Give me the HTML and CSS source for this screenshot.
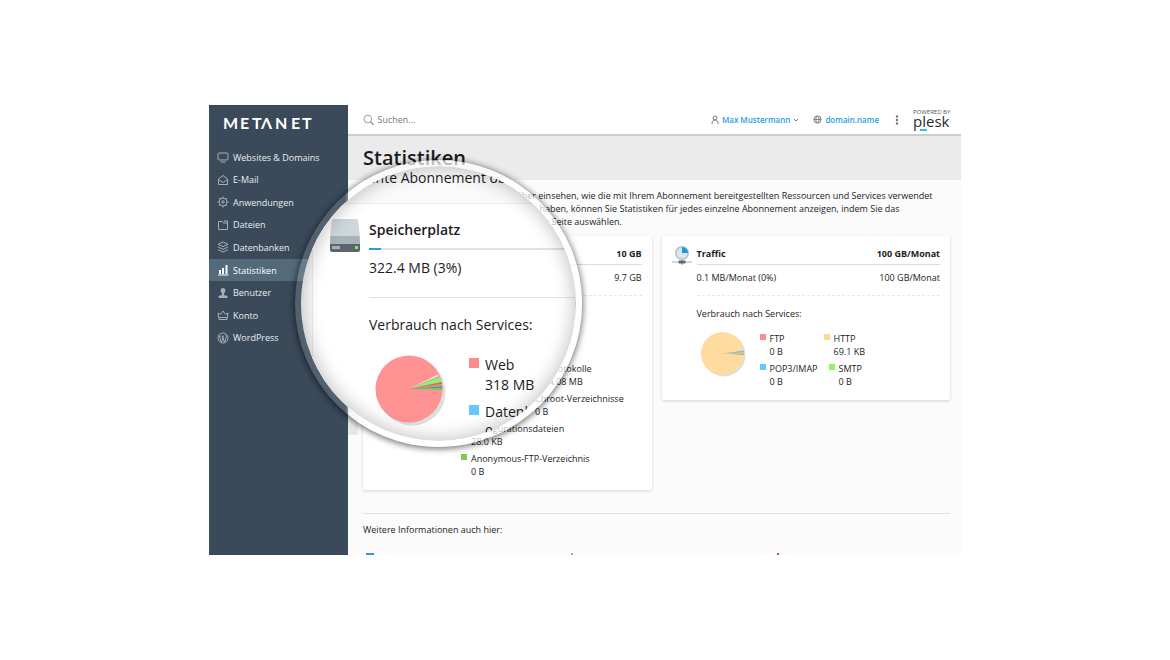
FILE: index.html
```html
<!DOCTYPE html>
<html lang="de">
<head>
<meta charset="utf-8">
<meta name="viewport" content="width=device-width, initial-scale=1">
<title>Statistiken</title>
<link rel="stylesheet" href="styles.css">
</head>
<body>
<div class="app">
  <aside class="sidebar">
    <svg class="brand" viewBox="0 0 92 20" role="img" aria-label="METANET"><text x="0 17 29 38 52 68 79" y="15">METΛNET</text></svg>
    <nav class="nav">
      <a href="#"><svg viewBox="0 0 12 12"><rect x="1" y="2" width="10" height="7" rx="1"/><path d="M3.500 11h5"/></svg>Websites &amp; Domains</a>
      <a href="#"><svg viewBox="0 0 12 12"><path d="M1.500 5 6 1.500 10.500 5v5.500h-9zM1.500 5.500 6 8.500l4.500-3"/></svg>E-Mail</a>
      <a href="#"><svg viewBox="0 0 12 12"><circle cx="6" cy="6" r="4"/><circle cx="6" cy="6" r="1.200"/><path d="M6 .5V2M6 10v1.500M.5 6H2M10 6h1.500M2.200 2.200l1 1M8.800 8.800l1 1M2.200 9.800l1-1M8.800 3.200l1-1"/></svg>Anwendungen</a>
      <a href="#"><svg viewBox="0 0 12 12"><path d="M1.500 2.500h4l1 1.500h4v6.500h-9zM7 2h3.500v2"/></svg>Dateien</a>
      <a href="#"><svg viewBox="0 0 12 12"><path d="M6 1l5 2.300-5 2.300-5-2.300zM1 6l5 2.300L11 6M1 8.700 6 11l5-2.300"/></svg>Datenbanken</a>
      <a href="#" class="active" aria-current="page"><svg viewBox="0 0 12 12"><path d="M1 11h10.500"/><path class="bars" d="M3 10V6M6 10V4M9.500 10V1"/></svg>Statistiken</a>
      <a href="#"><svg viewBox="0 0 12 12"><path class="fill" d="M6 1c-1.700 0-2.500 1.200-2.300 2.700C3.800 5 4.500 6 5 6.500V8L1.500 9v2h9V9L7 8V6.500C7.500 6 8.200 5 8.300 3.700 8.500 2.200 7.700 1 6 1z"/></svg>Benutzer</a>
      <a href="#"><svg viewBox="0 0 12 12"><path d="M1 4l2.500 1.500L6 2l2.500 3.500L11 4l-1 6.500H2zM2 8.500h8"/></svg>Konto</a>
      <a href="#"><svg viewBox="0 0 12 12"><circle cx="6" cy="6" r="5"/><path d="M2.300 4.200l2.200 6 1.600-4.500L5.500 4M5.300 4.200l2.200 6 1.800-5c.3-1-.8-1.400-.8-2.400M1.800 4.200h2M4.700 4.200h2.200"/></svg>WordPress</a>
    </nav>
    <button class="handle" type="button" aria-label="Menü einklappen"></button>
  </aside>

  <div class="content">
    <header class="topbar">
      <label class="search">
        <svg viewBox="0 0 12 12"><circle cx="5" cy="5" r="4"/><path d="M8 8l1 1M9 9l2 2" stroke-width="1.500"/></svg>
        <input type="text" placeholder="Suchen..." aria-label="Suchen">
      </label>
      <a href="#" class="account"><svg viewBox="0 0 8 10"><circle cx="4" cy="3" r="2"/><path d="M1 9c0-2.500 1-4 3-4s3 1.500 3 4"/></svg>Max Mustermann<svg class="caret" viewBox="0 0 6 4"><path d="M1 1l2 2 2-2"/></svg></a>
      <a href="#" class="account"><svg class="globe" viewBox="0 0 10 10"><circle cx="5" cy="5" r="4"/><ellipse cx="5" cy="5" rx="1.800" ry="4"/><path d="M1 5h8"/></svg>domain.name</a>
      <button class="more" type="button" aria-label="Mehr"><svg viewBox="0 0 4 10"><circle cx="2" cy="1.500" r="1.200"/><circle cx="2" cy="5" r="1.200"/><circle cx="2" cy="8.500" r="1.200"/></svg></button>
      <svg class="plesk" viewBox="0 0 38 24" role="img" aria-label="Powered by plesk"><text class="powered" x="0" y="6">POWERED BY</text><text class="word" x="0" y="19">plesk</text><path d="M7 22h7"/></svg>
    </header>
    <div class="title"><h1>Statistiken</h1></div>
    <main>
      <div class="intro">
        <p class="first">darüber einsehen, wie die mit Ihrem Abonnement bereitgestellten Ressourcen und Services verwendet</p>
        <p class="second">abonniert haben, können Sie Statistiken für jedes einzelne Abonnement anzeigen, indem Sie das</p>
        <p class="third">auf der Seite auswählen.</p>
      </div>
      <div class="cards">
        <section class="card">
          <div class="body">
            <div class="row head"><h2>Speicherplatz</h2><b>10 GB</b></div>
            <div class="row usage"><span>322.4 MB (3%)</span><span>9.7 GB</span></div>
            <p class="by">Verbrauch nach Services:</p>
            <div class="chart">
              <span class="pie"></span>
              <div class="legend">
                <div><span class="item pink">Web<br>318 MB</span></div>
                <div><span class="item blue">Datenbanken<br>0 B</span><span class="item tan">Protokolle<br>4.08 MB</span></div>
                <div><span class="item green">Mail<br>0 B</span><span class="item red">Chroot-Verzeichnisse<br>0 B</span></div>
                <div><span class="item steel">Konfigurationsdateien<br>28.0 KB</span></div>
                <div><span class="item leaf">Anonymous-FTP-Verzeichnis<br>0 B</span></div>
              </div>
            </div>
          </div>
        </section>
        <section class="card">
          <svg class="icon" viewBox="0 0 20 20"><circle cx="10" cy="7" r="7" fill="#b4c0c8"/><circle cx="10" cy="7" r="5.500" fill="#dce5ea"/><path d="M10 7V1a6 6 0 0 1 6 6z" fill="#1c98dc"/><path d="M0 16h20" stroke="#a4b0b8"/><path d="M10 14v5" stroke="#8a979f"/><rect x="6.500" y="14.500" width="7" height="3" rx="1" fill="#5b6870"/></svg>
          <div class="body">
            <div class="row head"><h2>Traffic</h2><b>100 GB/Monat</b></div>
            <div class="row usage"><span>0.1 MB/Monat (0%)</span><span>100 GB/Monat</span></div>
            <p class="by">Verbrauch nach Services:</p>
            <div class="chart">
              <svg class="pie" viewBox="0 0 46 46"><circle cx="23" cy="23" r="21.500" fill="#dfdfdf"/><circle cx="21.500" cy="21.500" r="21.500" fill="#fedb9e"/><path d="M22 21.500 43 18.500v2z" fill="#64c8fa"/><path d="M22 21.500 43 20.500v1.300z" fill="#96f060"/><path d="M22 21.500 43 21.800v1.200z" fill="#ff8a8a"/></svg>
              <div class="legend">
                <div><span class="item pink">FTP<br>0 B</span><span class="item tan">HTTP<br>69.1 KB</span></div>
                <div><span class="item blue">POP3/IMAP<br>0 B</span><span class="item green">SMTP<br>0 B</span></div>
              </div>
            </div>
          </div>
        </section>
      </div>
      <footer class="more-info">
        <p>Weitere Informationen auch hier:</p>
        <div class="links"><i class="l-blue"></i><i class="l-green"></i><i class="l-red"></i></div>
      </footer>
    </main>
  </div>

  <div class="lens">
    <div class="glass">
      <p class="lead">nnte Abonnement oberhalb</p>
      <div class="zoomed">
        <svg class="disk" viewBox="0 0 30 33"><path d="M4 0h22q2 0 2.300 2L30 18H0L1.700 2Q2 0 4 0z" fill="#ced7dd"/><path d="M.2 17h29.600l.2 9H0z" fill="#a8b4b8"/><path d="M0 25h30v6q0 2-2 2H2q-2 0-2-2z" fill="#5b656d"/><path d="M3 27v3M5 27v3M7 27v3M9 27v3" stroke="#fff"/><rect x="25" y="27" width="3" height="3" fill="#8fe05a"/></svg>
        <div class="detail">
          <h2>Speicherplatz</h2>
          <div class="meter"><span></span></div>
          <p class="used">322.4 MB (3%)</p>
          <p class="services">Verbrauch nach Services:</p>
          <div class="big-chart">
            <svg class="big-pie" viewBox="0 0 72 72"><circle cx="37" cy="37" r="33.500" fill="#dedede"/><circle cx="34" cy="34" r="33.500" fill="#ff9292"/><path d="M34 34 62.500 19.500l1.200 2z" fill="#fedb9e"/><path d="M34 34 63.700 21.500l1 2z" fill="#64c8fa"/><path d="M34 34 64.700 22.500 66.500 27z" fill="#94f35f"/><path d="M34 34 66.500 27l.5 2z" fill="#c8705e"/><path d="M34 34 67 29l.2 2.500z" fill="#c3a077"/><path d="M34 34 67.200 31.300l.3 2z" fill="#4e93bd"/><path d="M34 34 67.500 33v2z" fill="#7ccb50"/></svg>
            <div class="big-legend"><span class="item pink">Web<br>318 MB</span><span class="item blue">Datenbanken<br>0 B</span></div>
          </div>
        </div>
      </div>
    </div>
  </div>
</div>
</body>
</html>
```
FILE: styles.css
```css
* { box-sizing: border-box; }
body {
  margin: 0;
  min-height: 100vh;
  display: flex;
  align-items: center;
  justify-content: center;
  background: #fff;
  color: #222;
  font: 9px/13px "Open Sans", "Noto Sans", sans-serif;
}
h1, h2, p { margin: 0; }
a { text-decoration: none; }
button { border: 0; padding: 0; background: none; }
svg { fill: none; stroke-linecap: butt; }

.app {
  position: relative;
  display: flex;
  width: 100%;
  max-width: 752px;
  overflow: hidden;
}

/* Sidebar */
.sidebar {
  position: relative;
  flex: 0 0 139px;
  padding-top: 9px;
  background: #3a4a5b;
}
.brand { display: block; width: 92px; height: 20px; margin-left: 14px; }
.brand text { fill: #fff; font: 700 16px Lato, sans-serif; }
.nav {
  display: grid;
  grid-auto-rows: 1fr;
  height: 203px;
  margin-top: 12px;
}
.nav a {
  display: flex;
  align-items: center;
  gap: 4px;
  padding-left: 8px;
  color: #e9edf0;
}
.nav svg { width: 12px; height: 12px; stroke: #a3afb9; }
.nav .fill { fill: #a3afb9; stroke: none; }
.nav .active { background: #536a7b; color: #fff; }
.nav .active svg { stroke: #fff; }
.nav .bars { stroke-width: 2; }
.handle {
  position: absolute;
  left: 100%;
  top: 290px;
  z-index: 1;
  width: 10px;
  height: 40px;
  background: #e8e8e8;
}

/* Content */
.content { flex: 1; min-width: 0; background: #fbfbfc; }
.topbar {
  display: flex;
  align-items: center;
  height: 31px;
  padding: 0 10px 0 15px;
  border-bottom: 2px solid #cdcdcd;
  background: #fff;
}
.search { display: flex; align-items: center; gap: 3px; flex: 1; }
.search svg { width: 12px; height: 12px; stroke: #999; }
.search input {
  width: 100%;
  border: 0;
  padding: 0;
  background: none;
  font: inherit;
  color: #555;
  outline: 0;
}
.search input::placeholder { color: #777; opacity: 1; }
.account {
  display: flex;
  align-items: center;
  gap: 3px;
  margin-right: 14px;
  color: #28a0dc;
  font-size: 8px;
  font-weight: 600;
}
.account svg { width: 8px; height: 10px; stroke: #777; }
.account .caret { width: 6px; height: 4px; }
.account .globe { width: 9px; height: 9px; }
.more { margin-left: 2px; }
.more svg { display: block; width: 4px; height: 10px; fill: #777; }
.plesk { width: 38px; height: 24px; margin-left: 14px; }
.plesk .powered { fill: #555; font: 400 6px "Open Sans", sans-serif; }
.plesk .word { fill: #222b33; font: 500 15px "Open Sans", sans-serif; }
.plesk path { stroke: #35bdf0; stroke-width: 2; }
.title { padding: 9px 15px; background: #ebebeb; }
h1 { font-size: 20px; font-weight: 600; line-height: 26px; color: #1b1b1f; }
main { padding: 9px 11px 0 15px; }
.intro p { white-space: nowrap; }
.first { padding-left: 139px; }
.second { padding-left: 133px; }
.third { padding-left: 156px; }

.cards {
  display: grid;
  grid-template-columns: 1fr 1fr;
  gap: 10px;
  align-items: start;
  margin-top: 8px;
}
.card {
  position: relative;
  padding: 11px 10px 12px 35px;
  border-radius: 2px;
  background: #fff;
  box-shadow: 0 1px 3px #d2d2d6;
}
.icon { position: absolute; left: 10px; top: 10px; width: 20px; height: 20px; }
.row { display: flex; justify-content: space-between; }
.head { padding-bottom: 4px; border-bottom: 1px solid #dcdcde; }
.card h2 { font-size: 9px; font-weight: 700; line-height: 13px; }
.card b { font-weight: 700; }
.usage { padding: 6px 0 11px; border-bottom: 1px dashed #e8e8e8; }
.by { margin-top: 11px; }
.chart { display: flex; gap: 13px; margin-top: 12px; padding-left: 4px; }
.chart .pie { flex: 0 0 46px; width: 46px; height: 46px; }
.legend { display: grid; gap: 4px; }
.legend div { display: flex; gap: 11px; }
.item {
  min-width: 53px;
  padding-left: 10px;
  background: linear-gradient(var(--swatch), var(--swatch)) 0 2px / 6px 6px no-repeat;
}
.pink { --swatch: #ff8c8c; }
.blue { --swatch: #64c8fa; }
.tan { --swatch: #fed994; }
.green { --swatch: #94f35f; }
.red { --swatch: #c8705e; }
.steel { --swatch: #4e93bd; }
.leaf { --swatch: #7ccb50; }

.more-info { margin-top: 23px; padding-top: 9px; border-top: 1px solid #e3e3e5; }
.links { display: grid; grid-template-columns: 35% 35% 30%; height: 2px; margin-top: 17px; }
.links i { height: 2px; margin-left: 3px; }
.l-blue { width: 8px; background: #3798d8; }
.l-green { width: 2px; background: #7cc54e; }
.l-red { width: 2px; background: #c9502e; }

/* Magnifier */
.lens {
  position: absolute;
  left: 86px;
  top: 55px;
  z-index: 2;
  width: 287px;
  height: 287px;
  padding: 6px;
  border-radius: 50%;
  background: linear-gradient(90deg, rgba(255, 255, 255, .12) 50px, rgba(255, 255, 255, .7) 58px);
  box-shadow: 0 1px 6px 1px rgba(0, 0, 0, .55);
  color: #1c1c1f;
  font-size: 14px;
  line-height: 20px;
}
.glass {
  position: relative;
  height: 100%;
  overflow: hidden;
  border-radius: 50%;
  background: #fafafa;
}
.glass::after {
  content: "";
  position: absolute;
  inset: 0;
  border-radius: 50%;
  box-shadow: inset 0 0 18px 2px rgba(0, 0, 0, .24);
}
.lead { padding: 2px 0 1px 66px; white-space: nowrap; }
.zoomed {
  display: flex;
  gap: 9px;
  height: 260px;
  margin: 14px 0 0 11px;
  padding: 15px 0 0 17px;
  border: 1px solid #ececee;
  background: #fff;
}
.disk { flex: 0 0 30px; width: 30px; height: 33px; }
.detail { flex: 1; white-space: nowrap; }
.detail h2 { padding-top: 1px; font-size: 14px; font-weight: 600; line-height: 20px; }
.meter { height: 2px; margin-top: 8px; background: #e2e2e4; }
.meter span { display: block; width: 12px; height: 2px; background: #2d9cdb; }
.used { padding: 8px 0 19px; border-bottom: 1px solid #e2e2e4; }
.services { margin-top: 17px; }
.big-chart { display: flex; gap: 22px; margin-top: 20px; padding-left: 6px; }
.big-pie { flex: 0 0 72px; width: 72px; height: 72px; }
.big-legend { display: grid; gap: 7px; }
.big-legend .item { padding-left: 16px; background-size: 10px 10px; background-position: 0 3px; }
```
